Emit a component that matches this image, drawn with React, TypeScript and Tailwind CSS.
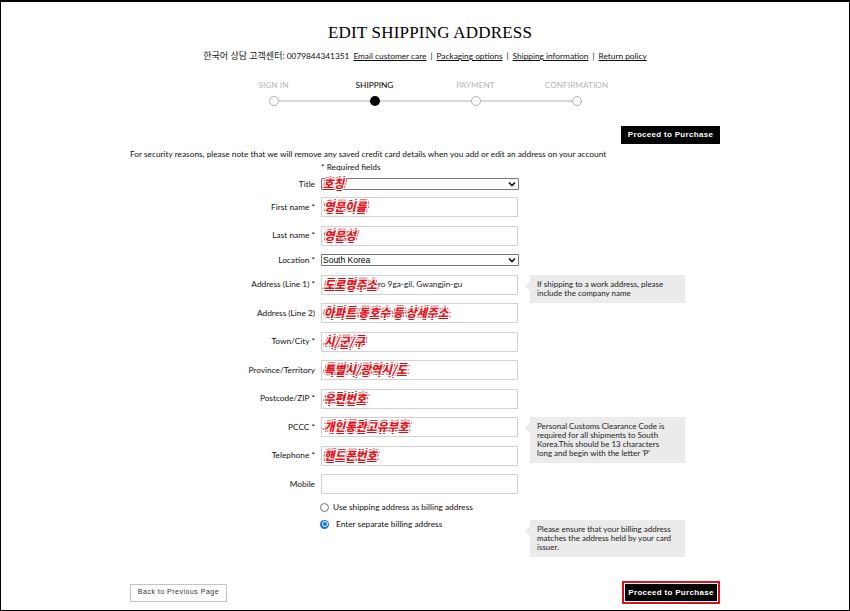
import React from 'react';

type Row = {
  label: string;
  kind?: 'select' | 'input';
  note?: string;
  value?: string;
  tip?: React.ReactNode;
  tipH?: string;
};

const rows: Row[] = [
  { label: 'Title', kind: 'select', note: '호칭' },
  { label: 'First name *', note: '영문이름' },
  { label: 'Last name *', note: '영문성' },
  { label: 'Location *', kind: 'select', value: 'South Korea' },
  {
    label: 'Address (Line 1) *',
    note: '도로명주소',
    value: 'ro 9ga-gil, Gwangjin-gu',
    tip: (
      <>
        If shipping to a work address, please
        <br />
        include the company name
      </>
    ),
    tipH: 'h-[28px]',
  },
  { label: 'Address (Line 2)', note: '아파트 동호수 등 상세주소' },
  { label: 'Town/City *', note: '시/군/구' },
  { label: 'Province/Territory', note: '특별시/광역시/도' },
  { label: 'Postcode/ZIP *', note: '우편번호' },
  {
    label: 'PCCC *',
    note: '개인통관고유부호',
    tip: (
      <>
        Personal Customs Clearance Code is
        <br />
        required for all shipments to South
        <br />
        Korea.This should be 13 characters
        <br />
        long and begin with the letter 'P'
      </>
    ),
    tipH: 'h-[46px]',
  },
  { label: 'Telephone *', note: '핸드폰번호' },
  { label: 'Mobile' },
];

const Note = ({ children }: { children: React.ReactNode }) => (
  <span className="whitespace-nowrap font-['Noto_Sans_CJK_KR',sans-serif] text-[11.5px] font-black italic leading-none text-[#e3141b] [text-shadow:1px_0_0_#fff,-1px_0_0_#fff,0_1px_0_#fff,0_-1px_0_#fff,1px_1px_0_#fff,-1px_-1px_0_#fff,1px_-1px_0_#fff,-1px_1px_0_#fff,2px_0_0_#c8101a,-2px_0_0_#c8101a,0_2px_0_#c8101a,0_-2px_0_#c8101a]">
    {children}
  </span>
);

const Tip = ({ children, h, top = 'top-0' }: { children: React.ReactNode; h: string; top?: string }) => (
  <div className={`absolute left-[400px] ${top} ${h} w-[155px] bg-[#ebebeb] pl-[7px] pt-[5px] text-[8px] leading-[9px] text-[#222]`}>
    <span className="absolute left-[-5px] top-[6px] h-0 w-0 border-y-[5px] border-r-[5px] border-y-transparent border-r-[#ebebeb]" />
    {children}
  </div>
);

const Chevron = () => (
  <svg width="8" height="6" viewBox="0 0 8 6" className="shrink-0">
    <path d="M1 1.5l3 3 3-3" fill="none" stroke="#111" strokeWidth="1.6" />
  </svg>
);

const Field = ({ row }: { row: Row }) => {
  if (row.kind === 'select') {
    return (
      <div className="flex h-[12px] w-[198px] items-center justify-between rounded-[1px] border border-[#767676] bg-white pl-[1px] pr-[2px]">
        {row.note ? (
          <Note>{row.note}</Note>
        ) : (
          <span className="font-['Liberation_Sans',sans-serif] text-[8.5px] leading-none text-black">{row.value}</span>
        )}
        <Chevron />
      </div>
    );
  }
  return (
    <div className="flex h-[20px] w-[197px] items-center border border-[#d2d2d2] bg-white pl-[2px]">
      {row.note && <Note>{row.note}</Note>}
      {row.value && <span className="ml-[1px] text-[8.3px] text-[#222]">{row.value}</span>}
    </div>
  );
};

const steps = ['SIGN IN', 'SHIPPING', 'PAYMENT', 'CONFIRMATION'];

export default function App() {
  return (
    <div className="h-[611px] w-[850px] overflow-hidden border-t-2 border-l border-r border-b border-black bg-white font-['Lato','Noto_Sans_CJK_KR',sans-serif] text-[#111]">
      <div className="mx-auto w-[590px]">
        <h1 className="pl-[10px] pt-[21px] text-center font-['Liberation_Serif',serif] text-[17px] leading-[20px] tracking-[0.2px] text-black">
          EDIT SHIPPING ADDRESS
        </h1>
        <div className="mt-[7px] flex items-center justify-center gap-[4px] text-[8.3px] leading-[12px]">
          <span>
            <span className="text-[9px]">한국어 상담 고객센터:</span> 0079844341351
          </span>
          <span className="underline">Email customer care</span>
          <span>|</span>
          <span className="underline">Packaging options</span>
          <span>|</span>
          <span className="underline">Shipping information</span>
          <span>|</span>
          <span className="underline">Return policy</span>
        </div>

        <div className="mx-auto mt-[17px] flex w-[404px]">
          {steps.map((s, i) => (
            <div key={s} className="flex w-[101px] flex-col items-center">
              <span className={`text-[8.3px] leading-[12px] ${i === 1 ? 'text-black' : 'text-[#b8b8b8]'}`}>{s}</span>
              <div className="mt-[5px] flex w-full items-center">
                <div className={`h-[1.5px] flex-1 ${i === 0 ? 'bg-transparent' : 'bg-[#d6d6d6]'}`} />
                <div
                  className={`h-[10px] w-[10px] rounded-full ${
                    i === 1 ? 'bg-black' : 'border border-[#b0b0b0] bg-white'
                  }`}
                />
                <div className={`h-[1.5px] flex-1 ${i === 3 ? 'bg-transparent' : 'bg-[#d6d6d6]'}`} />
              </div>
            </div>
          ))}
        </div>

        <div className="mt-[20px] flex justify-end">
          <button className="h-[18px] w-[99px] bg-black font-['Liberation_Sans',sans-serif] text-[8px] font-bold tracking-[0.3px] text-white">
            Proceed to Purchase
          </button>
        </div>

        <p className="mt-[4px] text-[8.3px] leading-[12px]">
          For security reasons, please note that we will remove any saved credit card details when you add or edit an address on your account
        </p>
        <p className="mt-[1px] pl-[191px] text-[8.3px] leading-[12px]">* Required fields</p>

        <div className="mt-[5px] flex flex-col gap-[8.5px]">
          {rows.map((r, i) => (
            <div key={r.label} className={`relative flex items-center ${i === 0 ? '-mb-[1.5px]' : ''}`}>
              <label className="w-[191px] pr-[6px] text-right text-[8.3px] leading-none">{r.label}</label>
              <Field row={r} />
              {r.tip && <Tip h={r.tipH ?? ''}>{r.tip}</Tip>}
            </div>
          ))}
        </div>

        <div className="mt-[7px] flex items-center pl-[190px] text-[8.3px] leading-[12px]">
          <span className="h-[9px] w-[9px] rounded-full border border-[#767676] bg-white" />
          <span className="ml-[4px]">Use shipping address as billing address</span>
        </div>
        <div className="relative mt-[5px] flex items-center pl-[190px] text-[8.3px] leading-[12px]">
          <span className="flex h-[9px] w-[9px] items-center justify-center rounded-full bg-[#1a73e8]">
            <span className="h-[6px] w-[6px] rounded-full border border-white bg-[#1a73e8]" />
          </span>
          <span className="ml-[7px]">Enter separate billing address</span>
          <Tip h="h-[37px]" top="top-[2px]">
            Please ensure that your billing address
            <br />
            matches the address held by your card
            <br />
            issuer.
          </Tip>
        </div>

        <div className="mt-[51px] flex items-center justify-between">
          <button className="h-[18px] w-[97px] border border-[#c4c4c4] bg-white font-['Liberation_Sans',sans-serif] text-[7px] tracking-[0.5px] text-[#333]">
            Back to Previous Page
          </button>
          <div className="border-2 border-[#d7121b] p-[1px]">
            <button className="block h-[17px] w-[92px] bg-black font-['Liberation_Sans',sans-serif] text-[8px] font-bold tracking-[0.3px] text-white">
              Proceed to Purchase
            </button>
          </div>
        </div>
      </div>
    </div>
  );
}
